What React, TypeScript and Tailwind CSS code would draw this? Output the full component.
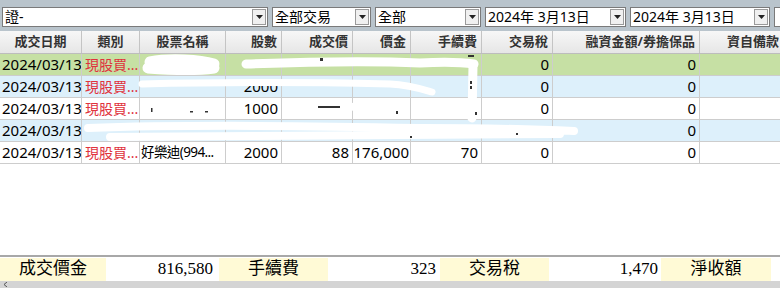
import React from "react";

const cols = "grid-cols-[82px_58px_86px_56px_71px_58px_71px_71px_147px_84px]";

type Row = {
  bg: string;
  date: string;
  kind: string;
  name: string;
  qty: string;
  price: string;
  amount: string;
  fee: string;
  tax: string;
  margin: string;
};

const rows: Row[] = [
  { bg: "bg-[#c6e0a4]", date: "2024/03/13", kind: "現股買...", name: "", qty: "", price: "", amount: "", fee: "", tax: "0", margin: "0" },
  { bg: "bg-[#ddf0fb]", date: "2024/03/13", kind: "現股買...", name: "", qty: "2000", price: "", amount: "", fee: "", tax: "0", margin: "0" },
  { bg: "bg-white", date: "2024/03/13", kind: "現股買...", name: "", qty: "1000", price: "", amount: "", fee: "", tax: "0", margin: "0" },
  { bg: "bg-[#ddf0fb]", date: "2024/03/13", kind: "", name: "", qty: "", price: "", amount: "", fee: "", tax: "", margin: "0" },
  { bg: "bg-white", date: "2024/03/13", kind: "現股買...", name: "好樂迪(994...", qty: "2000", price: "88", amount: "176,000", fee: "70", tax: "0", margin: "0" },
];

function Combo({ w, text }: { w: string; text: string }) {
  return (
    <div className={`${w} flex h-[20px] shrink-0 items-center border border-[#7a7a7a] bg-white`}>
      <span className="flex-1 overflow-hidden whitespace-nowrap pl-[2px] text-[14px] leading-[18px] text-black">{text}</span>
      <span className="mr-[1px] flex h-[16px] w-[14px] items-center justify-center border border-[#9a9a9a] bg-[#f0f0f0]">
        <svg width="7" height="4" viewBox="0 0 7 4">
          <path d="M0 0h7L3.5 4z" fill="#222" />
        </svg>
      </span>
    </div>
  );
}

const head = ["成交日期", "類別", "股票名稱", "股數", "成交價", "價金", "手續費", "交易稅", "融資金額/券擔保品", "資自備款"];
const headAlign = ["justify-center", "justify-center", "justify-center", "justify-end", "justify-end", "justify-end", "justify-end", "justify-end", "justify-end", "justify-end"];

function Cell({ children, cls = "" }: { children?: React.ReactNode; cls?: string }) {
  return (
    <div className={`flex h-[22px] items-center overflow-hidden whitespace-nowrap border-r border-b border-[#cdcdcd] ${cls}`}>
      {children}
    </div>
  );
}

export default function App() {
  return (
    <div className="relative flex h-[288px] w-[780px] flex-col overflow-hidden bg-white font-['Noto_Sans','Noto_Sans_CJK_TC',sans-serif] text-black">
      <div className="flex h-[31px] shrink-0 items-center gap-[4px] bg-[#b9c4cc] pl-[2px] pt-[2px]">
        <Combo w="w-[266px]" text="證-" />
        <Combo w="w-[99px]" text="全部交易" />
        <Combo w="w-[106px]" text="全部" />
        <Combo w="w-[141px]" text="2024年  3月13日" />
        <Combo w="w-[140px]" text="2024年  3月13日" />
        <div className="h-[20px] w-[20px] shrink-0 border border-[#7a7a7a] bg-white" />
      </div>

      <div className={`grid ${cols} h-[23px] shrink-0 border-b border-[#bdbdbd] bg-gradient-to-b from-[#f7f7f7] to-[#e6e6e6]`}>
        {head.map((h, i) => (
          <div
            key={h}
            className={`flex items-center overflow-hidden whitespace-nowrap border-r border-[#c4c4c4] px-[4px] text-[13px] font-bold text-[#333] ${headAlign[i]}`}
          >
            {h}
          </div>
        ))}
      </div>

      {rows.map((r, i) => (
        <div key={i} className={`grid ${cols} shrink-0 text-[15px] ${r.bg}`}>
          <Cell cls="pl-[2px]">{r.date}</Cell>
          <Cell cls="pl-[3px] text-[14px] text-[#e0323c]">{r.kind}</Cell>
          <Cell cls="pl-[1px] text-[13.5px] tracking-[-0.6px]">{r.name}</Cell>
          <Cell cls="justify-end pr-[3px]">{r.qty}</Cell>
          <Cell cls="justify-end pr-[3px]">{r.price}</Cell>
          <Cell cls="justify-end pr-[1px]">{r.amount}</Cell>
          <Cell cls="justify-end pr-[3px]">{r.fee}</Cell>
          <Cell cls="justify-end pr-[3px]">{r.tax}</Cell>
          <Cell cls="justify-end pr-[3px]">{r.margin}</Cell>
          <Cell />
        </div>
      ))}

      <div className="flex-1" />

      <div className="flex h-[26px] shrink-0 items-center gap-[1px] border-t-2 border-[#a8a8a8] font-['Liberation_Serif','Noto_Sans_CJK_TC',serif] text-[17px]">
        <div className="flex h-[23px] w-[106px] items-center justify-center bg-[#fffad6]">成交價金</div>
        <div className="flex h-[23px] w-[111px] items-center justify-end pr-[5px]">816,580</div>
        <div className="flex h-[23px] w-[109px] items-center justify-center bg-[#fffad6]">手續費</div>
        <div className="flex h-[23px] w-[110px] items-center justify-end pr-[3px]">323</div>
        <div className="flex h-[23px] w-[109px] items-center justify-center bg-[#fffad6]">交易稅</div>
        <div className="flex h-[23px] w-[110px] items-center justify-end pr-[2px]">1,470</div>
        <div className="flex h-[23px] w-[110px] items-center justify-center bg-[#fffad6]">淨收額</div>
        <div className="h-[23px] flex-1" />
      </div>

      <div className="flex h-[7px] shrink-0 items-center bg-[#d4d4d4] pl-[4px]">
        <svg width="4" height="5" viewBox="0 0 4 5">
          <path d="M3 0L0 2.5 3 5" stroke="#555" fill="none" />
        </svg>
      </div>

      {/* redaction scribbles */}
      <svg className="pointer-events-none absolute left-0 top-0" width="780" height="288" viewBox="0 0 780 288">
        <g stroke="#fff" strokeLinecap="round" strokeLinejoin="round" fill="none">
          <path d="M150 62 C170 58 200 60 214 64 M148 68 C175 70 200 70 214 68" strokeWidth="11" />
          <path d="M246 64 C300 62 360 60 420 63 C440 62 460 62 474 64" strokeWidth="9" />
          <path d="M473 66 L472 118" strokeWidth="9" />
          <path d="M142 84 C220 82 300 82 390 84 C410 85 425 90 432 92" strokeWidth="7" />
          <path d="M290 108 C320 106 350 106 380 108" strokeWidth="8" />
          <path d="M88 128 C200 124 320 126 420 128 C480 128 530 129 574 131 M110 137 C250 136 380 136 560 134" strokeWidth="8" />
          <path d="M150 106 C170 107 190 106 210 105" strokeWidth="6" />
        </g>
        <g fill="#333">
          <rect x="151" y="108" width="1.5" height="4" />
          <rect x="190" y="111" width="3" height="1.5" />
          <rect x="205" y="111" width="3" height="1.5" />
          <rect x="320" y="58" width="3" height="3" />
          <rect x="470" y="81" width="2" height="3" />
          <rect x="470" y="86" width="2" height="3" />
          <rect x="475" y="112" width="2" height="3" />
          <rect x="468" y="55" width="6" height="2" />
          <rect x="318" y="106" width="22" height="2" />
          <rect x="396" y="111" width="2" height="3" />
          <rect x="410" y="136" width="2" height="2" />
          <rect x="516" y="133" width="2" height="2" />
        </g>
      </svg>
    </div>
  );
}
